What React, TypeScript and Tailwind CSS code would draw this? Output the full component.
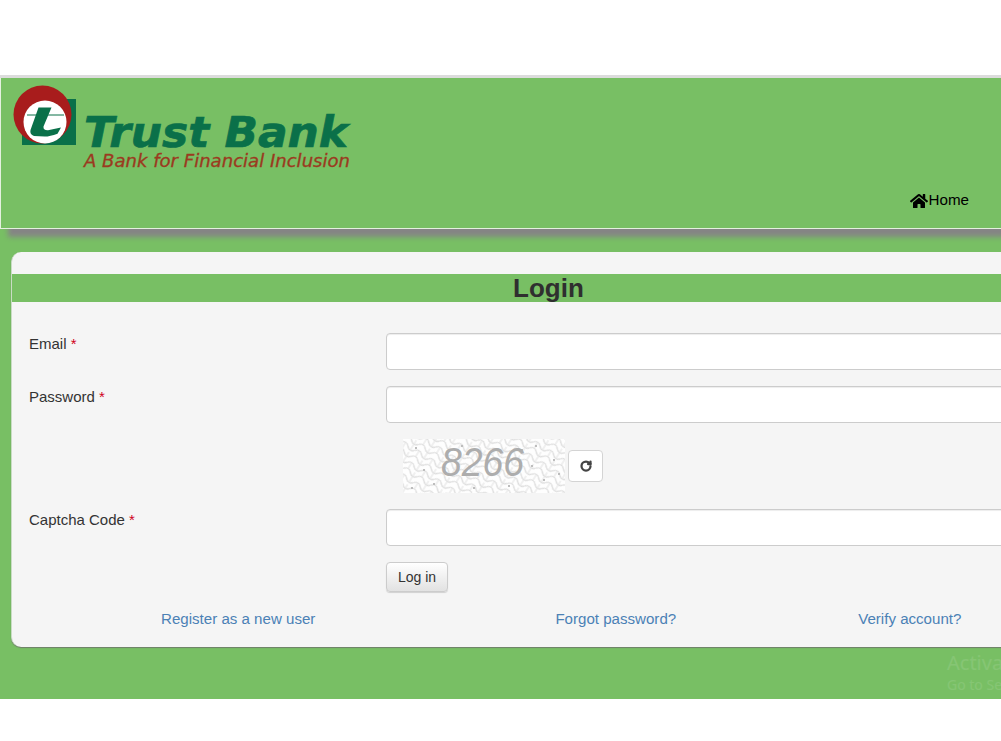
import React from "react";
import { FaHome } from "react-icons/fa";
import { RotateCw } from "lucide-react";

function Logo() {
  return (
    <svg width="345" height="90" viewBox="0 0 345 90" className="block">
      <rect x="10" y="14" width="54" height="46" fill="#0a7049" />
      <circle cx="30.500" cy="29.500" r="29" fill="#a81c1c" />
      <circle cx="33" cy="37" r="21.500" fill="#ffffff" />
      <path d="M15 30 H52" stroke="#0a7049" strokeWidth="1" fill="none" />
      <path d="M26.500 22.500 H39.500 L31.500 41.500 Q31 45.500 36 45.300 L49 42.500 L45.500 48.700 Q38 51.500 32.700 51.500 L22 51 Q17.500 49.500 18.500 45 Z" fill="#0a7049" />
      <text x="72" y="62" textLength="264" lengthAdjust="spacingAndGlyphs" fontFamily="'DejaVu Sans', sans-serif" fontWeight="700" fontStyle="italic" fontSize="43" fill="#0a7049" stroke="#0a7049" strokeWidth="0.700">Trust Bank</text>
      <text x="72" y="82" textLength="266" lengthAdjust="spacingAndGlyphs" fontFamily="'DejaVu Sans', sans-serif" fontStyle="italic" fontSize="17" fill="#9b3a20" stroke="#9b3a20" strokeWidth="0.300">A Bank for Financial Inclusion</text>
    </svg>
  );
}

function Captcha() {
  const specks = [[12, 8], [30, 44], [58, 6], [20, 30], [118, 10], [128, 26], [140, 40], [150, 20], [70, 48], [105, 46], [155, 34], [8, 48], [132, 6]];
  return (
    <svg width="162" height="54" viewBox="0 0 162 54" className="block">
      <defs>
        <pattern id="net" width="16" height="14" patternUnits="userSpaceOnUse" patternTransform="rotate(32)">
          <rect width="16" height="14" fill="#fefefe" />
          <path d="M0 3.500 Q4 -1 8 3.500 T16 3.500 M0 10.500 Q4 6 8 10.500 T16 10.500" stroke="#dddddd" strokeWidth="1.200" fill="none" />
          <path d="M4 1 V8 M12 8 V15 M12 -1 V6" stroke="#e3e3e3" strokeWidth="1" fill="none" />
        </pattern>
      </defs>
      <rect width="162" height="54" fill="url(#net)" />
      {specks.map(([x, y]) => (
        <rect key={`${x}-${y}`} x={x} y={y} width="2" height="2" fill="#bdbdbd" />
      ))}
      <text x="38" y="37" textLength="83" lengthAdjust="spacingAndGlyphs" fontFamily="'Liberation Sans', sans-serif" fontStyle="italic" fontSize="41" fill="#adadad">8266</text>
    </svg>
  );
}

function Field({ label, className = "" }: { label: string; className?: string }) {
  return (
    <div className={`flex ${className}`}>
      <label className="w-[374px] shrink-0 pl-[17px] pt-[1px] leading-[20px] text-[15px] text-[#333333]">
        {label} <span className="text-[#d0021b]">*</span>
      </label>
      <div className="h-[37px] w-[700px] shrink-0 rounded-[4px] border border-[#cccccc] bg-white shadow-[inset_0_1px_1px_rgba(0,0,0,0.075)]" />
    </div>
  );
}

export default function App() {
  return (
    <div className="relative h-[741px] w-[1001px] overflow-hidden bg-white font-['Liberation_Sans',Arial,sans-serif]">
      <div className="h-[75px] bg-white" />
      <div className="h-[3px] bg-[#dcdcdc]" />
      <main className="h-[621px] bg-[#78bf64]">
        <header className="relative flex h-[151px] flex-col justify-between border-b border-l border-[#e4f0df] bg-[#78bf64] pl-[11px] pt-[7px] shadow-[8px_8px_5px_#858585]">
          <Logo />
          <div className="flex justify-end pb-[18px] pr-[32px]">
            <a className="flex items-center text-[15.200px] leading-[18px] text-black">
              <FaHome size={18} className="mt-[2px]" />
              Home
            </a>
          </div>
        </header>
        <div className="ml-[11px] mt-[23px] h-[395px] w-[1074px] rounded-[10px] border-l border-[#c9dcc4] bg-[#f5f5f5] pt-[22px] shadow-[0_1px_1px_#6f7f6a]">
          <h1 className="h-[28px] bg-[#78bf64] text-center text-[26px] font-bold leading-[28px] text-[#2f2f2f]">Login</h1>
          <Field label="Email" className="mt-[31px]" />
          <Field label="Password" className="mt-[16px]" />
          <div className="ml-[391px] mt-[16px] flex items-center gap-[3px]">
            <Captcha />
            <button className="flex h-[32px] w-[35px] items-center justify-center rounded-[4px] border border-[#d4d4d4] bg-white text-[#444444]">
              <RotateCw size={12} strokeWidth={4.500} />
            </button>
          </div>
          <Field label="Captcha Code" className="mt-[16px]" />
          <div className="ml-[374px] mt-[16px]">
            <button className="h-[30px] w-[62px] rounded-[4px] border border-[#cccccc] bg-gradient-to-b from-white to-[#e2e2e2] text-[14px] text-[#333333] shadow-[0_1px_1px_rgba(0,0,0,0.15)]">Log in</button>
          </div>
          <div className="mt-[17px] flex whitespace-nowrap pl-[149px] text-[15.100px] leading-[20px] text-[#4b81b5]">
            <a>Register as a new user</a>
            <a className="ml-[240px]">Forgot password?</a>
            <a className="ml-[182px]">Verify account?</a>
          </div>
        </div>
      </main>
      <div className="pointer-events-none absolute left-[947px] top-[651px] whitespace-nowrap font-['Noto_Sans',sans-serif] text-white/10">
        <div className="text-[20px] leading-[24px]">Activate Windows</div>
        <div className="text-[14px] leading-[20px]">Go to Settings</div>
      </div>
    </div>
  );
}
